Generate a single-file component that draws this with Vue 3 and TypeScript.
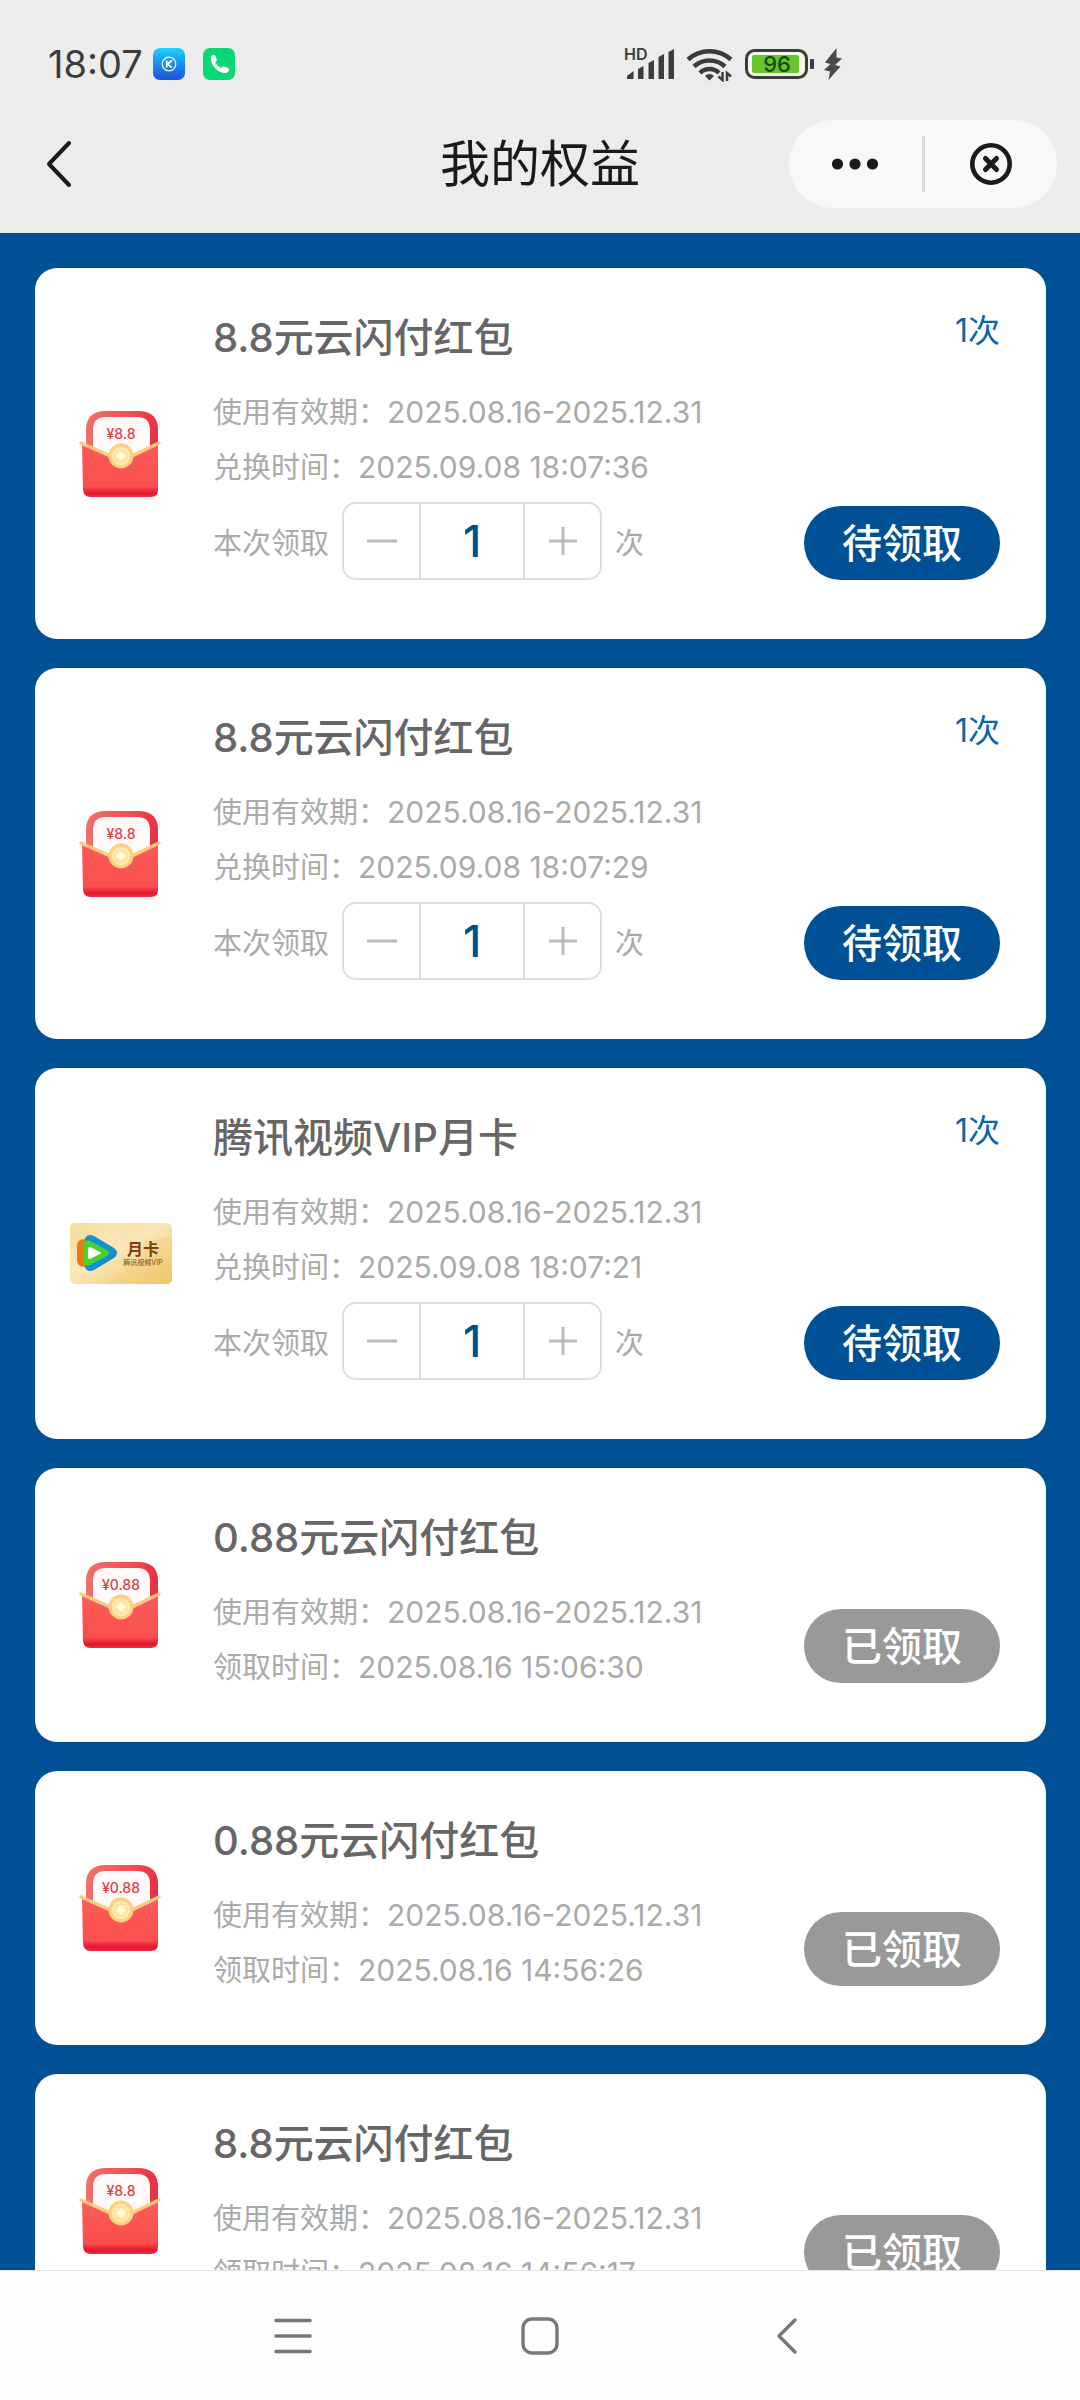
<script setup lang="ts">
import { reactive } from 'vue'

interface Benefit {
  id: number
  title: string
  kind: 'packet' | 'video'
  amount?: string
  validity: string
  timeLabel: string
  time: string
  claimed: boolean
  count: number
}

const benefits = reactive<Benefit[]>([
  { id: 1, title: '8.8元云闪付红包', kind: 'packet', amount: '¥8.8', validity: '2025.08.16-2025.12.31', timeLabel: '兑换时间', time: '2025.09.08 18:07:36', claimed: false, count: 1 },
  { id: 2, title: '8.8元云闪付红包', kind: 'packet', amount: '¥8.8', validity: '2025.08.16-2025.12.31', timeLabel: '兑换时间', time: '2025.09.08 18:07:29', claimed: false, count: 1 },
  { id: 3, title: '腾讯视频VIP月卡', kind: 'video', validity: '2025.08.16-2025.12.31', timeLabel: '兑换时间', time: '2025.09.08 18:07:21', claimed: false, count: 1 },
  { id: 4, title: '0.88元云闪付红包', kind: 'packet', amount: '¥0.88', validity: '2025.08.16-2025.12.31', timeLabel: '领取时间', time: '2025.08.16 15:06:30', claimed: true, count: 1 },
  { id: 5, title: '0.88元云闪付红包', kind: 'packet', amount: '¥0.88', validity: '2025.08.16-2025.12.31', timeLabel: '领取时间', time: '2025.08.16 14:56:26', claimed: true, count: 1 },
  { id: 6, title: '8.8元云闪付红包', kind: 'packet', amount: '¥8.8', validity: '2025.08.16-2025.12.31', timeLabel: '领取时间', time: '2025.08.16 14:56:17', claimed: true, count: 1 },
])

function step(item: Benefit, delta: number) {
  item.count = Math.max(1, Number(item.count) + delta)
}
</script>

<template>
  <div class="page">
    <header class="header">
      <div class="status">
        <div class="status-left">
          <span class="clock">18:07</span>
          <svg class="app-icon" width="32" height="32" viewBox="0 0 32 32" aria-hidden="true">
            <defs>
              <linearGradient id="app-blue" x1="0" y1="0" x2="0" y2="1">
                <stop offset="0" stop-color="#1fd3fb" />
                <stop offset="0.5" stop-color="#1a8df0" />
                <stop offset="1" stop-color="#1f52dc" />
              </linearGradient>
            </defs>
            <rect width="32" height="32" rx="7" fill="url(#app-blue)" />
            <circle cx="16" cy="16" r="6.8" fill="none" stroke="#fff" stroke-width="1.2" />
            <path d="M13.7 12.5v7M18.8 12.5l-4.4 3.6 4.4 3.4" fill="none" stroke="#fff" stroke-width="1.8" />
          </svg>
          <svg class="app-icon" width="32" height="32" viewBox="0 0 32 32" aria-hidden="true">
            <rect width="32" height="32" rx="7" fill="#0cd873" />
            <path d="M8 8.2c1.600-1.600 3.800-1.600 4.500.1l1.200 3c.5 1.300-.9 2.100-1.500 3 1.400 2.800 3.100 4.400 5.700 5.500 1-.7 1.700-1.900 3.100-1.400l3.800 1.400c1.500.6 1.700 2.700.4 4-4.200 4.400-18.900-3.600-17.200-15.600z" fill="#fff" />
          </svg>
        </div>
        <div class="status-right" aria-hidden="true">
          <svg width="52" height="44" viewBox="0 -4 52 44">
            <text x="0" y="14" class="hd">HD</text>
            <path d="M3 33h6.500v-8l-6.500 5zM14 33h5.500V20L14 23zM24.500 33H30V14l-5.500 3zM34.500 33H40V8l-5.500 3zM44.500 33H50V3l-5.500 3z" fill="#3c3c3c" />
          </svg>
          <svg width="48" height="36" viewBox="0 0 48 36">
            <g fill="none" stroke="#3c3c3c" stroke-width="4.500">
              <path d="M2 13.500a32 32 0 0 1 43 0" />
              <path d="M8 20.500a23 23 0 0 1 31 0" />
              <path d="M14 27a13.500 13.500 0 0 1 19 0" />
            </g>
            <path d="M19 30q4.500-4 9 0l-4.500 4.500z" fill="#3c3c3c" />
            <path d="M36.500 26v8l-4-3.500M41 35v-8l4 3.500" fill="none" stroke="#3c3c3c" stroke-width="2.500" />
          </svg>
          <svg width="70" height="32" viewBox="0 0 70 32">
            <rect x="2.500" y="2.500" width="60" height="27" rx="8" fill="#f1fbe9" stroke="#3c3c3c" stroke-width="3" />
            <rect x="8" y="7" width="47" height="18" rx="2" fill="#66c52b" />
            <rect x="66" y="11" width="4" height="10" rx="1" fill="#3c3c3c" />
            <text x="33" y="24" text-anchor="middle" class="charge">96</text>
          </svg>
          <svg width="18" height="32" viewBox="0 0 18 32">
            <path d="M12.500 0 1 14.500l5.500 1.500L0 22l6 1.500L4.500 32 16.500 18.500 11 17l7-6.500-5.500-1z" fill="#4a4a4a" />
          </svg>
        </div>
      </div>
      <div class="navbar">
        <button class="back" type="button" aria-label="返回">
          <svg width="28" height="48" viewBox="0 0 28 48"><path d="M24 3 4 24l20 21" fill="none" stroke="#1a1a1a" stroke-width="4" stroke-linecap="round" stroke-linejoin="round" /></svg>
        </button>
        <h1 class="page-title">我的权益</h1>
        <div class="capsule">
          <button type="button" aria-label="更多">
            <svg width="48" height="12" viewBox="0 0 48 12" fill="#1a1a1a"><circle cx="6.500" cy="6" r="5.600" /><circle cx="24" cy="6" r="5.600" /><circle cx="41.500" cy="6" r="5.600" /></svg>
          </button>
          <span class="divider"></span>
          <button type="button" aria-label="关闭">
            <svg width="44" height="44" viewBox="0 0 44 44" fill="none" stroke="#1a1a1a"><circle cx="22" cy="22" r="18.700" stroke-width="4.600" /><path d="m16.500 16.500 11 11m0-11-11 11" stroke-width="5" stroke-linecap="round" /></svg>
          </button>
        </div>
      </div>
    </header>

    <main class="list">
      <article v-for="item in benefits" :key="item.id" class="card">
        <svg v-if="item.kind === 'packet'" class="thumb" viewBox="0 0 102 102" aria-hidden="true">
          <defs>
            <linearGradient :id="'back' + item.id" x1="0" y1="0" x2="1" y2="0">
              <stop offset="0" stop-color="#f0706a" />
              <stop offset="0.6" stop-color="#f4504f" />
              <stop offset="1" stop-color="#e62f42" />
            </linearGradient>
            <linearGradient :id="'front' + item.id" x1="0" y1="0" x2="0" y2="1">
              <stop offset="0" stop-color="#fb5c5a" />
              <stop offset="0.8" stop-color="#fa4f4c" />
              <stop offset="0.93" stop-color="#e4142f" />
              <stop offset="1" stop-color="#ea3048" />
            </linearGradient>
            <radialGradient :id="'seal' + item.id">
              <stop offset="0" stop-color="#fffbe0" />
              <stop offset="0.5" stop-color="#fde39a" />
              <stop offset="1" stop-color="#fbcb78" />
            </radialGradient>
          </defs>
          <path d="M16 60V27Q16 8 36 8H68Q88 8 88 27V60z" :fill="'url(#back' + item.id + ')'" />
          <path d="M23 60V27Q23 14 36 14H67Q80 14 80 27V60z" fill="#fffaf9" />
          <path d="M12 41 40 54H63L88 41V87Q88 94 81 94H20Q14 94 13 87z" :fill="'url(#front' + item.id + ')'" />
          <path d="M11 40 38 52Q43 56 50 56T64 52L89 40" fill="none" stroke="#fcca80" stroke-width="3.500" stroke-linecap="round" />
          <circle cx="51" cy="53" r="12.500" :fill="'url(#seal' + item.id + ')'" />
          <circle cx="51" cy="53" r="8" fill="none" stroke="#fff0b8" stroke-width="1.500" />
          <path d="m51 48 2 4 4 1-4 1-2 4-2-4-4-1 4-1z" fill="#fffef2" />
          <text x="51" y="36" text-anchor="middle" class="packet-amount">{{ item.amount }}</text>
        </svg>
        <svg v-else class="thumb" viewBox="0 0 102 102" aria-hidden="true">
          <defs>
            <linearGradient id="gold" x1="0" y1="0" x2="1" y2="1">
              <stop offset="0" stop-color="#f3d389" />
              <stop offset="0.45" stop-color="#fae7b9" />
              <stop offset="1" stop-color="#edc25f" />
            </linearGradient>
          </defs>
          <rect y="20" width="102" height="61" rx="5" fill="url(#gold)" />
          <path d="M34 81Q66 66 75 38L102 34V76Q102 81 97 81z" fill="#f3cf7c" opacity="0.35" />
          <path d="M0 71Q30 60 60 20H5Q0 20 0 25z" fill="#fff3cf" opacity="0.25" />
          <path d="M15 36Q7 36 7 43V57Q7 64 15 64z" fill="#ea7a14" />
          <path d="M15 36Q17 30 24 33L44 45Q50 50 44 55L24 67Q17 70 15 64z" fill="#168fd0" />
          <path d="M14 40Q15 36 20 38L37 47Q41 50 37 53L20 62Q15 64 14 60z" fill="#48d32a" />
          <path d="M18 46Q18 43 21 44.500L30 49Q32 50 30 51L21 55.500Q18 57 18 54z" fill="#fff" />
          <text x="73" y="52" text-anchor="middle" class="month">月卡</text>
          <text x="73" y="62" text-anchor="middle" class="month-sub">腾讯视频VIP</text>
        </svg>

        <div class="info">
          <h2 class="title">{{ item.title }}</h2>
          <p class="line">使用有效期：<span class="digits">{{ item.validity }}</span></p>
          <p class="line">{{ item.timeLabel }}：<span class="digits">{{ item.time }}</span></p>
          <div v-if="!item.claimed" class="quantity">
            <label :for="'count' + item.id">本次领取</label>
            <div class="stepper">
              <button type="button" aria-label="减少" @click="step(item, -1)">
                <svg width="30" height="30" viewBox="0 0 30 30"><path d="M0 15h30" stroke="#bbb" stroke-width="3" /></svg>
              </button>
              <input :id="'count' + item.id" v-model="item.count" type="text" inputmode="numeric" />
              <button type="button" aria-label="增加" @click="step(item, 1)">
                <svg width="30" height="30" viewBox="0 0 30 30"><path d="M1 15h28M15 1v28" stroke="#bbb" stroke-width="3" /></svg>
              </button>
            </div>
            <span class="unit">次</span>
          </div>
        </div>

        <div class="side">
          <span v-if="!item.claimed" class="times">1次</span>
          <button class="claim" type="button" :disabled="item.claimed">{{ item.claimed ? '已领取' : '待领取' }}</button>
        </div>
      </article>
    </main>

    <nav class="system" aria-label="系统导航">
      <button type="button" aria-label="最近任务">
        <svg width="38" height="38" viewBox="0 0 38 38"><path d="M2 3.500h34M2 19h34M2 34.500h34" stroke="#777" stroke-width="3.600" stroke-linecap="round" /></svg>
      </button>
      <button type="button" aria-label="主屏幕">
        <svg width="38" height="38" viewBox="0 0 38 38"><rect x="2" y="2" width="34" height="34" rx="9" fill="none" stroke="#777" stroke-width="3.400" /></svg>
      </button>
      <button type="button" aria-label="后退">
        <svg width="20" height="38" viewBox="0 0 20 38"><path d="M18 3 2 19l16 16" fill="none" stroke="#777" stroke-width="3.400" stroke-linecap="round" stroke-linejoin="round" /></svg>
      </button>
    </nav>
  </div>
</template>

<style>
body {
  margin: 0;
}
</style>

<style scoped>
.page {
  display: flex;
  flex-direction: column;
  height: 100vh;
  overflow: hidden;
  background: #005096;
  font-family: Inter, "Noto Sans CJK SC", sans-serif;
}

button {
  display: flex;
  align-items: center;
  justify-content: center;
  padding: 0;
  border: 0;
  background: none;
  font: inherit;
  color: inherit;
}

svg {
  display: block;
  flex: none;
}

.header {
  flex: none;
  background: #ececec;
}

.status {
  display: flex;
  align-items: center;
  justify-content: space-between;
  height: 62px;
  padding: 33px 238px 0 48px;
}

.status-left {
  display: flex;
  align-items: center;
}

.clock {
  width: 105px;
  font-size: 38px;
  line-height: 48px;
  color: #3c3c3c;
}

.app-icon {
  margin-right: 18px;
}

.status-right {
  display: flex;
  align-items: center;
  gap: 10px;
}

.hd {
  font-size: 16px;
  font-weight: 600;
  fill: #3c3c3c;
}

.charge {
  font-size: 22px;
  font-weight: 500;
  fill: #17480b;
}

.navbar {
  display: grid;
  grid-template-columns: 1fr auto 1fr;
  align-items: center;
  height: 138px;
  padding: 0 23px 0 45px;
}

.navbar .page-title {
  padding-right: 22px;
}

.back {
  justify-self: start;
}

.page-title {
  margin: 0;
  font-size: 50px;
  line-height: 60px;
  font-weight: 400;
  color: #1a1a1a;
}

.capsule {
  display: flex;
  align-items: center;
  justify-self: end;
  width: 268px;
  height: 88px;
  border-radius: 44px;
  background: #f8f8f8;
}

.capsule button {
  flex: 1;
  height: 88px;
}

.divider {
  width: 3px;
  height: 56px;
  background: #d8d8d8;
}

.list {
  display: flex;
  flex-direction: column;
  flex: 1;
  gap: 29px;
  min-height: 0;
  padding: 35px 34px 0 35px;
  overflow-y: auto;
  scrollbar-width: none;
}

.card {
  display: flex;
  flex: none;
  align-items: center;
  padding: 0 46px 0 35px;
  border-radius: 22px;
  background: #fff;
}

.thumb {
  width: 102px;
  height: 102px;
  margin-right: 41px;
}

.packet-amount {
  font-size: 14px;
  font-weight: 500;
  fill: #d9404e;
}

.month {
  font-size: 16px;
  font-weight: 700;
  fill: #7d3f12;
}

.month-sub {
  font-size: 7px;
  font-weight: 500;
  fill: #8f5f30;
}

.info {
  flex: 1;
  padding: 41px 0 47px;
}

.title {
  margin: 0 0 18px;
  font-size: 40px;
  line-height: 58px;
  font-weight: 500;
  color: #666;
}

.line {
  height: 55px;
  margin: 0;
  font-size: 29px;
  line-height: 55px;
  color: #aaa;
}

.digits {
  font-size: 30px;
}

.quantity {
  display: flex;
  align-items: center;
  gap: 13px;
  margin: 7px 0 12px;
  font-size: 29px;
  line-height: 55px;
  color: #aaa;
}

.quantity label,
.unit {
  padding-top: 4px;
}

.stepper {
  display: flex;
  box-sizing: border-box;
  width: 260px;
  height: 78px;
  border: 2px solid #ddd;
  border-radius: 14px;
}

.stepper button {
  flex: 1;
}

.stepper input {
  box-sizing: border-box;
  width: 106px;
  padding: 0;
  border: solid #ddd;
  border-width: 0 2px;
  background: none;
  font-family: inherit;
  font-size: 44px;
  font-weight: 500;
  text-align: center;
  color: #005090;
  outline: none;
}

.side {
  display: flex;
  flex-direction: column;
  align-items: flex-end;
  align-self: stretch;
  justify-content: space-between;
  padding: 41px 0 59px;
}

.times {
  font-size: 32px;
  line-height: 44px;
  color: #0a66a8;
}

.claim {
  width: 196px;
  height: 74px;
  margin-top: auto;
  padding-bottom: 4px;
  border-radius: 37px;
  background: #005096;
  font-size: 40px;
  font-weight: 500;
  color: #fff;
}

.claim:disabled {
  background: #999;
}

.system {
  display: flex;
  flex: none;
  justify-content: center;
  height: 129px;
  border-top: 1px solid #e2e2e2;
  background: #fefefe;
}

.system button {
  width: 247px;
  height: 129px;
}
</style>
